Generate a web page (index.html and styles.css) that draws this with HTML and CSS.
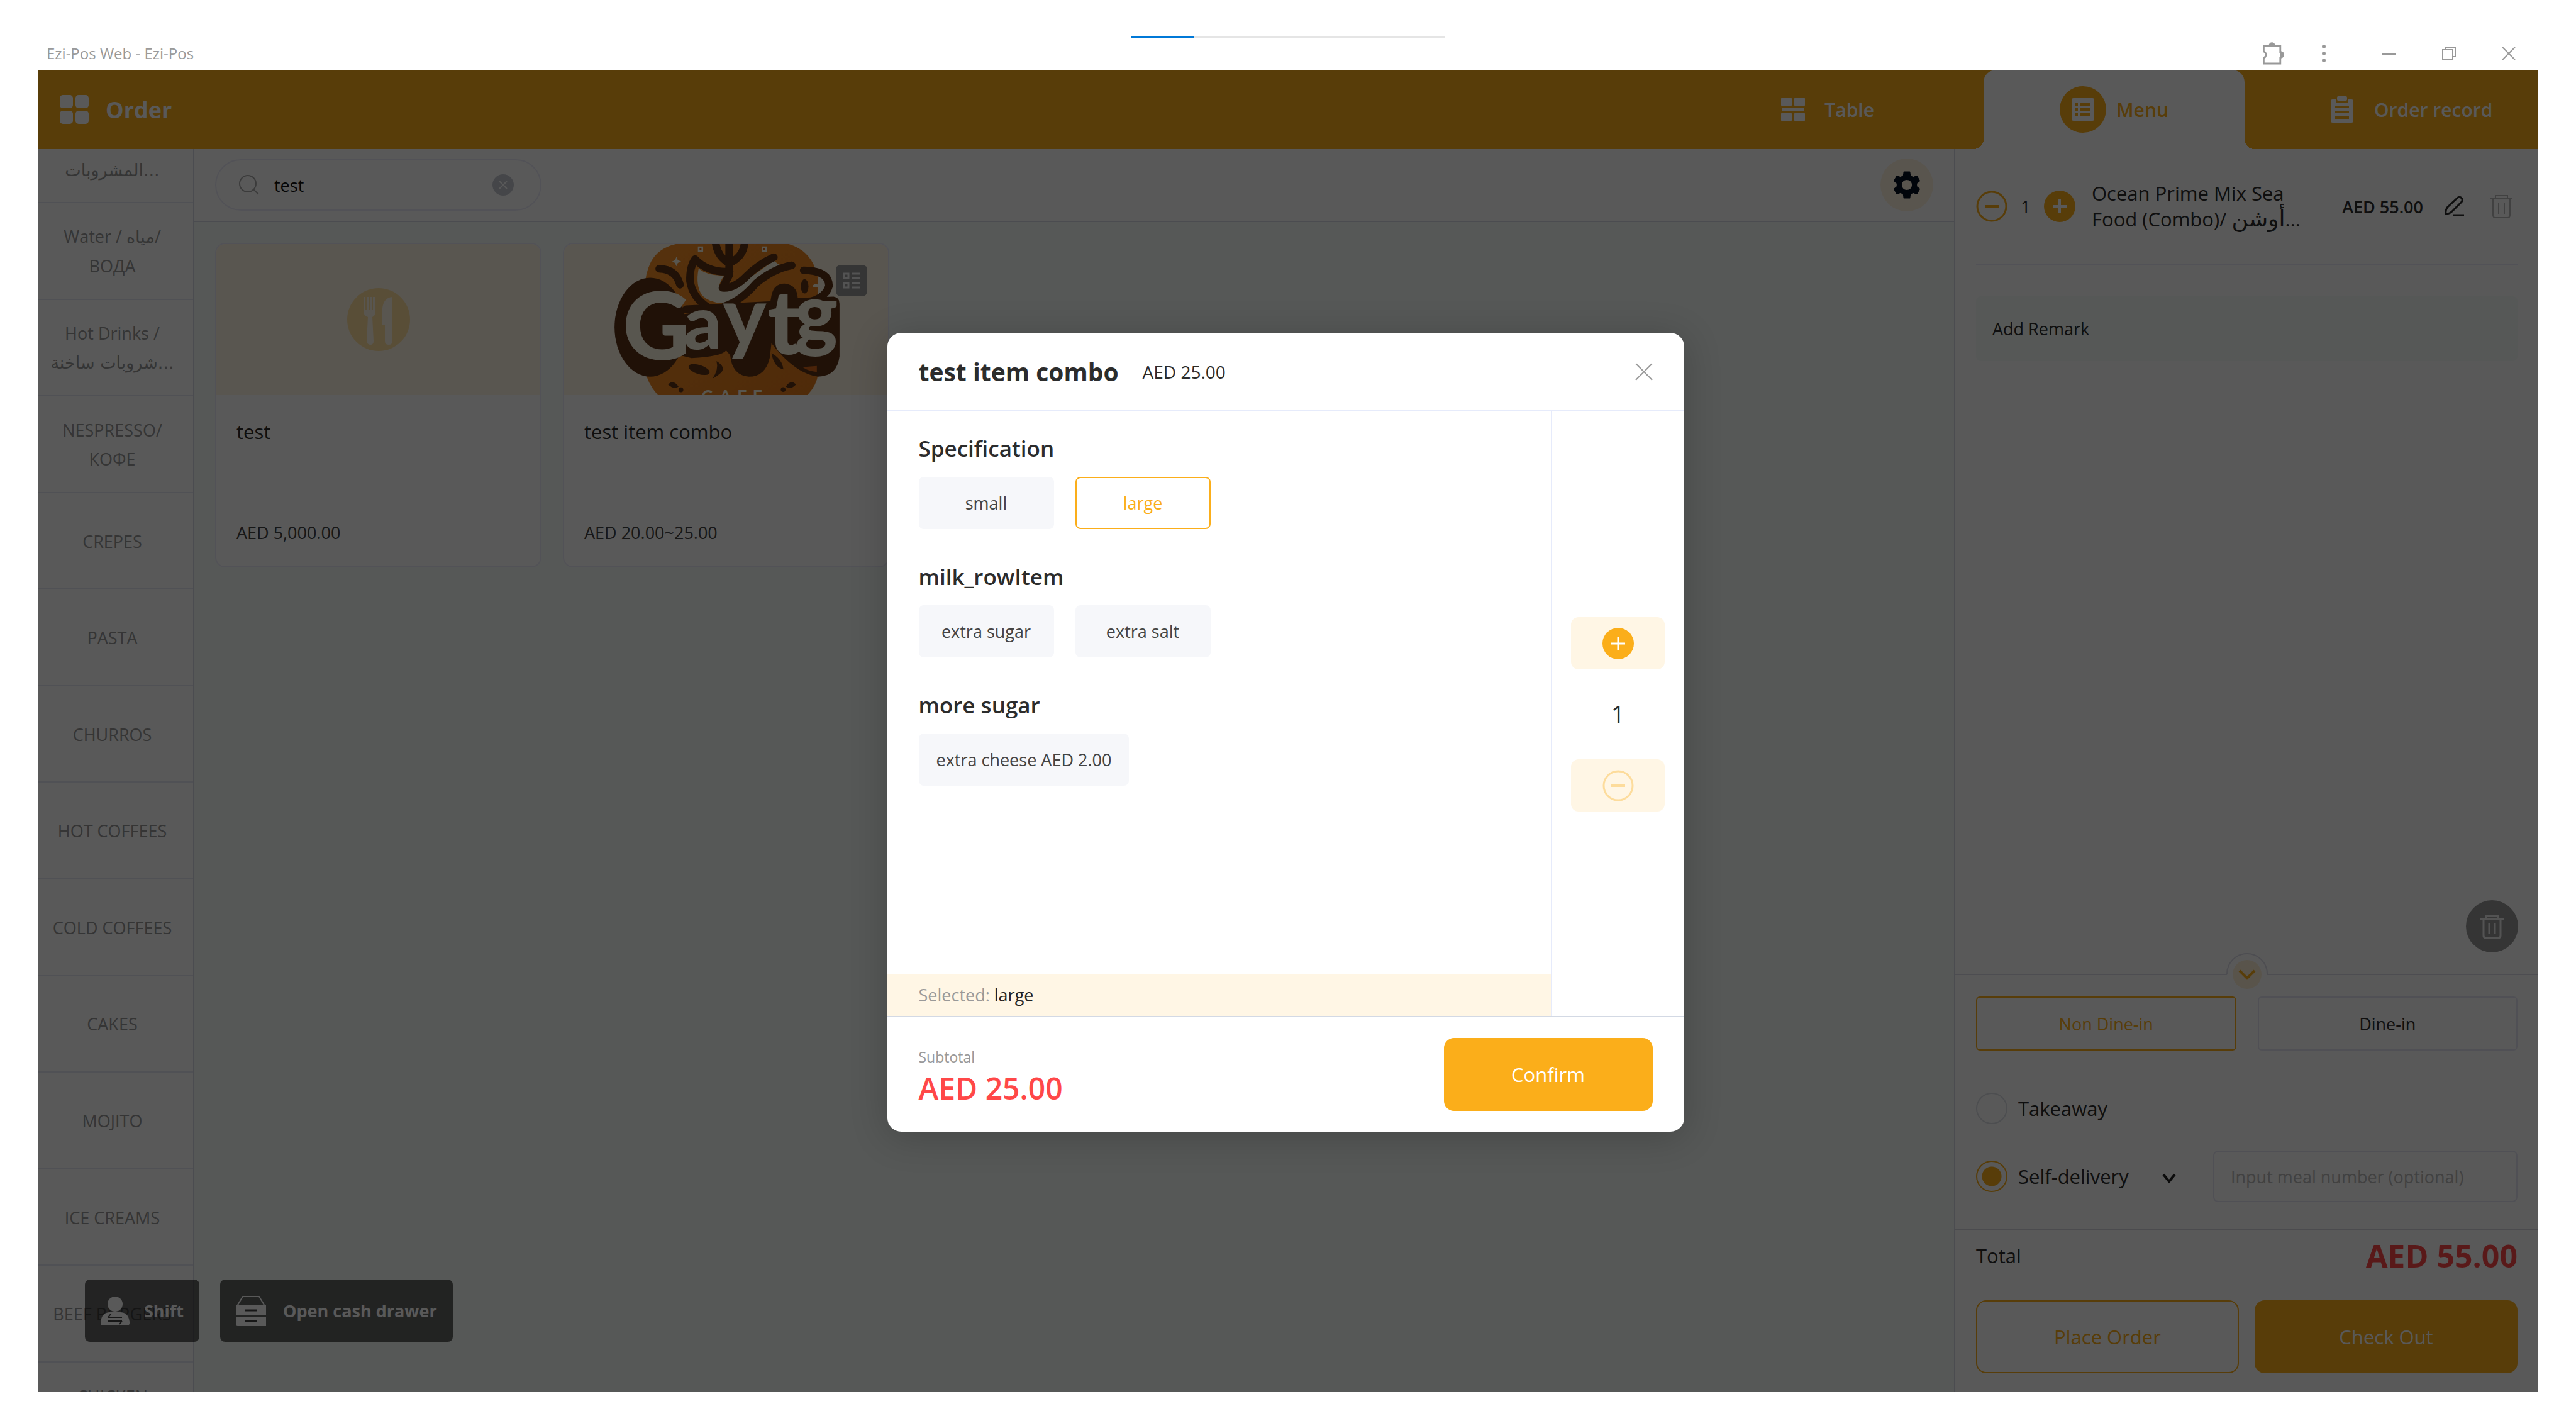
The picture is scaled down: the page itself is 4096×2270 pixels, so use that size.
FILE: index.html
```html
<!DOCTYPE html>
<html lang="en">
<head>
    <meta charset="UTF-8">
    <meta name="viewport" content="width=device-width, initial-scale=1.0">
    <title>Ezi-Pos Web - Ezi-Pos</title>
    <link rel="stylesheet" href="styles.css">
</head>
<body>
    <div class="load-bar"><div class="load-bar-fill"></div></div>

    <!-- Window title bar -->
    <div class="title-bar">
        <span class="window-title">Ezi-Pos Web - Ezi-Pos</span>
        <div class="window-buttons">
            <button class="win-btn" aria-label="Extensions">
                <svg width="36" height="40" viewBox="0 0 18 20" fill="none" stroke="#999" stroke-width="1.4"><path d="M1.7 4h13.2v4.8a2 2 0 0 1 0 4.4V18H1.7v-4.4a2.8 2.8 0 0 0 0-5.2z"/><path d="M6.5 3.6a1.8 1.8 0 0 1 3.6 0zM15.4 9a2 2 0 0 1 0 4z" fill="#999"/></svg>
            </button>
            <button class="win-btn dots" aria-label="More">
                <svg width="6" height="28" viewBox="0 0 6 28" fill="#999"><circle cx="3" cy="3" r="3"/><circle cx="3" cy="14" r="3"/><circle cx="3" cy="25" r="3"/></svg>
            </button>
            <button class="win-btn minimise" aria-label="Minimise">
                <svg width="22" height="22" viewBox="0 0 22 22" stroke="#999" stroke-width="2"><path d="M0 12h22"/></svg>
            </button>
            <button class="win-btn restore" aria-label="Restore">
                <svg width="22" height="22" viewBox="0 0 22 22" fill="none" stroke="#999" stroke-width="2"><path d="M1 5h16v16H1zM6 5V1h15v15h-4"/></svg>
            </button>
            <button class="win-btn close" aria-label="Close">
                <svg width="22" height="22" viewBox="0 0 22 22" stroke="#999" stroke-width="2"><path d="M1 1l20 20M21 1L1 21"/></svg>
            </button>
        </div>
    </div>

    <div class="app">
        <header class="app-header">
            <svg class="grid-icon" width="46" height="46" viewBox="0 0 46 46" fill="#fff"><rect width="21" height="21" rx="5"/><rect x="25" width="21" height="21" rx="5"/><rect y="25" width="21" height="21" rx="5"/><rect x="25" y="25" width="21" height="21" rx="5"/></svg>
            <h1>Order</h1>
            <nav class="tabs">
                <a href="#table" class="tab tab-table">
                    <svg width="38" height="38" viewBox="0 0 38 38" fill="#fff"><rect width="17" height="14" rx="2"/><rect x="21" width="17" height="14" rx="2"/><rect x="2" y="17" width="34" height="4"/><rect y="24" width="17" height="14" rx="2"/><rect x="21" y="24" width="17" height="14" rx="2"/></svg>
                    Table
                </a>
                <a href="#menu" class="tab tab-menu">
                    <svg width="74" height="74" viewBox="0 0 74 74"><circle cx="37" cy="37" r="37" fill="#fbae1a"/><rect x="19" y="19" width="36" height="36" rx="3" fill="#fff"/><path d="M25 29h4M33 29h16M25 37h4M33 37h16M25 45h4M33 45h16" stroke="#fbae1a" stroke-width="4"/></svg>
                    Menu
                </a>
                <a href="#record" class="tab tab-record">
                    <svg width="36" height="42" viewBox="0 0 36 42"><path d="M3 5h5v5h20V5h5q3 0 3 3v31q0 3-3 3H3q-3 0-3-3V8q0-3 3-3z" fill="#fff"/><rect x="10" width="16" height="7" rx="2" fill="#fff"/><path d="M7 17h22M7 25h22M7 34h22" stroke="#fbae1a" stroke-width="4"/></svg>
                    Order record
                </a>
            </nav>
        </header>

        <div class="app-body">
            <!-- Categories, scrolled a little -->
            <nav class="categories">
                <a href="#" class="category cut-top"><span class="ar">المشروبات...</span></a>
                <a href="#" class="category"><span>Water / <span class="ar">مياه</span>/<br>ВОДА</span></a>
                <a href="#" class="category"><span>Hot Drinks /<br><span class="ar">شروبات ساخنة...</span></span></a>
                <a href="#" class="category"><span>NESPRESSO/<br>КОФЕ</span></a>
                <a href="#" class="category">CREPES</a>
                <a href="#" class="category">PASTA</a>
                <a href="#" class="category">CHURROS</a>
                <a href="#" class="category">HOT COFFEES</a>
                <a href="#" class="category">COLD COFFEES</a>
                <a href="#" class="category">CAKES</a>
                <a href="#" class="category">MOJITO</a>
                <a href="#" class="category">ICE CREAMS</a>
                <a href="#" class="category">BEEF BURGERS</a>
                <a href="#" class="category cut-bottom">CHICKEN</a>
            </nav>

            <main class="products">
                <div class="toolbar">
                    <div class="search">
                        <svg width="32" height="32" viewBox="0 0 32 32" fill="none" stroke="#aaa" stroke-width="2"><circle cx="14" cy="14" r="13"/><path d="M23 23l8 8"/></svg>
                        <input type="text" value="test" aria-label="Search">
                        <button class="clear" aria-label="Clear search">
                            <svg width="34" height="34" viewBox="0 0 34 34"><circle cx="17" cy="17" r="17" fill="#c6c9d2"/><path d="M11 11l12 12M23 11L11 23" stroke="#fff" stroke-width="2"/></svg>
                        </button>
                    </div>
                    <button class="settings" aria-label="Settings">
                        <svg width="54" height="54" viewBox="0 0 24 24" fill="#050f22"><path fill-rule="evenodd" d="M19.14 12.94c.04-.3.06-.61.06-.94 0-.32-.02-.64-.07-.94l2.03-1.58a.49.49 0 0 0 .12-.61l-1.92-3.32a.49.49 0 0 0-.59-.22l-2.39.96a7 7 0 0 0-1.62-.94l-.36-2.54a.48.48 0 0 0-.48-.41h-3.84a.47.47 0 0 0-.47.41l-.36 2.54c-.59.24-1.13.57-1.62.94l-2.39-.96a.48.48 0 0 0-.59.22L2.74 8.87a.47.47 0 0 0 .12.61l2.03 1.58c-.05.3-.09.63-.09.94s.02.64.07.94l-2.03 1.58a.49.49 0 0 0-.12.61l1.92 3.32c.12.22.37.29.59.22l2.39-.96c.5.38 1.03.7 1.62.94l.36 2.54c.05.24.24.41.48.41h3.84c.24 0 .44-.17.47-.41l.36-2.54a7 7 0 0 0 1.62-.94l2.39.96c.22.08.47 0 .59-.22l1.92-3.32a.47.47 0 0 0-.12-.61zM12 15.6a3.6 3.6 0 1 1 0-7.2 3.6 3.6 0 0 1 0 7.2z"/></svg>
                    </button>
                </div>

                <div class="product-grid">
                    <article class="product-card">
                        <div class="product-image">
                            <svg width="100" height="100" viewBox="0 0 100 100"><circle cx="50" cy="50" r="50" fill="#ffdf9f"/><g fill="#fff6e5"><path d="M26 14h3v20h2V14h3v20h2V14h3v20h2V14h4v24q0 5-5 8l2 38q0 6-5 6t-6-6l2-38q-7-3-7-8z"/><path d="M72 14v70q0 6-6 6t-6-6V58h-4V32q2-17 16-18z"/></g></svg>
                        </div>
                        <div class="product-info">
                            <h2>test</h2>
                            <p>AED 5,000.00</p>
                        </div>
                    </article>

                    <article class="product-card">
                        <div class="product-image">
                            <svg class="logo" viewBox="85 75 1360 632" preserveAspectRatio="xMidYMid slice">
                                <defs>
                                    <linearGradient id="cafe" x1="0" y1="0" x2="1" y2="1">
                                        <stop offset="0" stop-color="#f58f26"/>
                                        <stop offset="1" stop-color="#e27a1c"/>
                                    </linearGradient>
                                </defs>
                                <path d="M555 75Q480 92 450 150Q425 200 425 260V600Q435 660 482 710H1103Q1145 665 1150 620V220Q1130 105 1028 75z" fill="url(#cafe)"/>
                                <!-- cup, leaf and steam -->
                                <path d="M650 178Q636 250 665 290Q725 345 820 300L995 168L965 145L795 265Q740 285 735 252Q745 220 758 206Q690 210 650 178z" fill="#fbf6e2"/>
                                <g fill="none" stroke="#5c3216" stroke-width="32" stroke-linecap="round" stroke-linejoin="round">
                                    <path d="M690 340Q625 300 614 230Q612 170 635 138Q690 195 780 190"/>
                                    <path d="M778 75V205L750 258Q800 262 850 210Q900 160 965 130"/>
                                    <path d="M722 75Q732 130 778 155Q835 130 842 75"/>
                                    <path d="M1040 164Q960 180 890 240Q830 310 760 335"/>
                                    <path d="M485 178Q555 180 572 245"/>
                                    <path d="M1090 185Q1195 185 1196 250Q1180 310 1080 322"/>
                                    <path d="M598 348L960 330"/>
                                </g>
                                <!-- lettering on its dark backing -->
                                <g fill="#5c3216">
                                    <ellipse cx="447" cy="423" rx="149" ry="207"/>
                                    <path d="M560 372L950 318L955 290Q965 240 1010 240Q1062 245 1065 300L1215 295Q1240 298 1240 325V545Q1230 628 1150 630Q1050 615 955 490L948 550Q930 630 860 630Q790 625 782 540L765 520Q750 545 620 552L570 540z"/>
                                </g>
                                <path d="M1085 590L1145 585V610Q1110 608 1085 590z" fill="#d4661a"/>
                                <text class="logo-word" y="560" fill="#fbf6e2"><tspan x="332" font-size="390">G</tspan><tspan x="588" y="515" font-size="310">a</tspan><tspan x="752" y="500" font-size="340">y</tspan><tspan x="938" y="535" font-size="370">t</tspan><tspan x="1052" y="485" font-size="340">g</tspan></text>
                                <g fill="#5c3216">
                                    <ellipse cx="652" cy="600" rx="46" ry="19" transform="rotate(18 652 600)"/>
                                    <path d="M725 565Q765 590 745 612Q725 630 708 638Q735 600 725 565z"/>
                                    <path d="M955 532Q1000 555 1005 600Q965 590 955 532z"/>
                                    <ellipse cx="1094" cy="252" rx="16" ry="30"/>
                                    <path d="M522 662Q545 640 566 672Q545 685 522 662zM1058 662Q1035 640 1015 672Q1038 685 1058 662z"/>
                                    <circle cx="576" cy="685" r="10"/>
                                    <circle cx="1004" cy="684" r="10"/>
                                </g>
                                <g fill="#fbf6e2">
                                    <path d="M557 128l6 14 14 6-14 6-6 14-6-14-12-6 12-6z"/>
                                    <path d="M647 85h22v22h-22zM914 85h22v22h-22z"/>
                                    <ellipse cx="1141" cy="250" rx="12" ry="7"/>
                                </g>
                                <path d="M654 92h8v8h-8zM921 92h8v8h-8z" fill="#d4661a"/>
                                <text class="logo-sub" x="662 738 812 876" y="736" font-size="70" fill="#fbf6e2">CAFE</text>
                            </svg>
                            <span class="combo-badge">
                                <svg width="28" height="26" viewBox="0 0 28 26" fill="none" stroke="#eee" stroke-width="3"><path d="M2 2h7v7H2zM2 17h7v7H2zM14 2h14M14 9h14M14 17h14M14 24h14"/></svg>
                            </span>
                        </div>
                        <div class="product-info">
                            <h2>test item combo</h2>
                            <p>AED 20.00~25.00</p>
                        </div>
                    </article>
                </div>
            </main>

            <!-- Current order -->
            <aside class="order-panel">
                <div class="order-list">
                    <div class="order-item">
                        <button class="round" aria-label="Less">
                            <svg width="50" height="50" viewBox="0 0 50 50" fill="none" stroke="#fbae1a"><circle cx="25" cy="25" r="23" stroke-width="3"/><path d="M14 25h22" stroke-width="4"/></svg>
                        </button>
                        <span class="item-qty">1</span>
                        <button class="round" aria-label="More">
                            <svg width="50" height="50" viewBox="0 0 50 50"><circle cx="25" cy="25" r="25" fill="#fbae1a"/><path d="M14 25h22M25 14v22" stroke="#fff" stroke-width="4"/></svg>
                        </button>
                        <span class="item-name">Ocean Prime Mix Sea<br>Food (Combo)/ <span class="ar">أوشن</span>...</span>
                        <span class="item-price">AED 55.00</span>
                        <button class="edit" aria-label="Edit">
                            <svg width="32" height="34" viewBox="0 0 32 34" fill="none" stroke="#2c2c2c" stroke-width="3"><path d="M2 29Q1 23 5 18L20 4Q23 1 26 3Q30 6 27 10L12 25Q8 29 2 29zM14 31h17"/></svg>
                        </button>
                        <button class="remove" aria-label="Delete">
                            <svg width="37" height="38" viewBox="0 0 37 38" fill="none" stroke="#bbb" stroke-width="2"><path d="M1 7h35M9 7V2h19v5M5 7v26q0 4 4 4h19q4 0 4-4V7M14 13v18M23 13v18"/></svg>
                        </button>
                    </div>
                    <button class="remark">Add Remark</button>
                    <button class="clear-order" aria-label="Clear order">
                        <svg width="37" height="38" viewBox="0 0 37 38" fill="none" stroke="#eee" stroke-width="3"><path d="M0 7h37M9 7V2h19v5M5 7v26q0 4 4 4h19q4 0 4-4V7M14 13v18M23 13v18"/></svg>
                    </button>
                </div>

                <div class="order-type">
                    <button class="collapse" aria-label="Collapse">
                        <svg width="68" height="68" viewBox="0 0 68 68"><circle cx="34" cy="34" r="32" fill="#fff"/><path d="M2 34a32 32 0 0 1 64 0" fill="none" stroke="#dcdce8" stroke-width="2"/><circle cx="34" cy="35" r="23" fill="#fff1d8"/><path d="M22 29l12 12 12-12" fill="none" stroke="#fbae1a" stroke-width="4"/></svg>
                    </button>
                    <div class="type-buttons">
                        <button class="type active">Non Dine-in</button>
                        <button class="type">Dine-in</button>
                    </div>
                    <label class="radio-row"><input type="radio" name="way">Takeaway</label>
                    <div class="delivery-row">
                        <label class="radio-row"><input type="radio" name="way" checked>Self-delivery</label>
                        <button class="more-ways" aria-label="Delivery options">
                            <svg width="22" height="20" viewBox="0 0 22 20" fill="none" stroke="#222" stroke-width="4"><path d="M2 4l9 11 9-11"/></svg>
                        </button>
                        <input type="text" class="meal-number" placeholder="Input meal number (optional)" aria-label="Meal number">
                    </div>
                </div>

                <div class="order-total">
                    <div class="total-row">
                        <span>Total</span>
                        <strong>AED 55.00</strong>
                    </div>
                    <div class="total-buttons">
                        <button class="btn-outline">Place Order</button>
                        <button class="btn-fill">Check Out</button>
                    </div>
                </div>
            </aside>
        </div>

        <div class="quick-actions">
            <button class="quick">
                <svg width="46" height="46" viewBox="0 0 46 46"><circle cx="23" cy="12" r="12" fill="#fff"/><path d="M0 42V40Q2 25 15 25h16q13 0 15 15v2q0 4-4 4H4q-4 0-4-4z" fill="#fff"/><path d="M12 33h22M16 28l-4 5M12 39h22M30 44l4-5" stroke="#444" stroke-width="2"/></svg>
                Shift
            </button>
            <button class="quick drawer">
                <svg width="48" height="48" viewBox="0 0 48 48"><path d="M2 16L11 1h26l9 15" fill="none" stroke="#fff" stroke-width="2"/><path d="M0 15h48v16H0zM0 33h48v15H3q-3 0-3-3z" fill="#fff"/><path d="M15 23h18M15 40h18" stroke="#444" stroke-width="3"/></svg>
                Open cash drawer
            </button>
        </div>

        <!-- Item options -->
        <div class="overlay">
            <section class="modal" role="dialog" aria-labelledby="modal-title">
                <div class="modal-header">
                    <h2 id="modal-title">test item combo</h2>
                    <span class="modal-price">AED 25.00</span>
                    <button class="modal-close" aria-label="Close">
                        <svg width="28" height="28" viewBox="0 0 28 28" stroke="#999" stroke-width="2"><path d="M1 1l26 26M27 1L1 27"/></svg>
                    </button>
                </div>
                <div class="modal-body">
                    <div class="modal-main">
                        <div class="option-groups">
                            <h3>Specification</h3>
                            <div class="options">
                                <button class="option">small</button>
                                <button class="option selected">large</button>
                            </div>
                            <h3>milk_rowItem</h3>
                            <div class="options">
                                <button class="option">extra sugar</button>
                                <button class="option">extra salt</button>
                            </div>
                            <h3>more sugar</h3>
                            <div class="options">
                                <button class="option">extra cheese AED 2.00</button>
                            </div>
                        </div>
                        <p class="selected-bar">Selected: <span>large</span></p>
                    </div>
                    <div class="quantity">
                        <button class="qty-btn" aria-label="Add one">
                            <svg width="50" height="50" viewBox="0 0 50 50"><circle cx="25" cy="25" r="25" fill="#fbae1a"/><path d="M14 25h22M25 14v22" stroke="#fff" stroke-width="3"/></svg>
                        </button>
                        <span>1</span>
                        <button class="qty-btn" aria-label="Remove one">
                            <svg width="50" height="50" viewBox="0 0 50 50" fill="none" stroke="#fddc9c"><circle cx="25" cy="25" r="23" stroke-width="3"/><path d="M14 25h22" stroke-width="4"/></svg>
                        </button>
                    </div>
                </div>
                <div class="modal-footer">
                    <div class="subtotal">
                        <span>Subtotal</span>
                        <strong>AED 25.00</strong>
                    </div>
                    <button class="btn-fill confirm">Confirm</button>
                </div>
            </section>
        </div>
    </div>
</body>
</html>
```
FILE: styles.css
```css
* {
    box-sizing: border-box;
}

body {
    margin: 0;
    min-height: 100vh;
    padding: 57px 60px 58px;
    display: flex;
    flex-direction: column;
    background-color: #fff;
    color: #2c2c2c;
    font-family: 'Open Sans', 'Noto Sans', 'DejaVu Sans', sans-serif;
    font-size: 27px;
}

h1, h2, h3, p {
    margin: 0;
}

a {
    color: inherit;
    text-decoration: none;
}

button, input {
    font: inherit;
    color: inherit;
    margin: 0;
    padding: 0;
    border: none;
    background: none;
}

svg {
    display: block;
    flex-shrink: 0;
}

.ar {
    font-family: 'DejaVu Sans', sans-serif;
}

.load-bar {
    width: 500px;
    height: 3px;
    margin: 0 auto;
    background-color: #e5e5e5;
}

.load-bar-fill {
    width: 20%;
    height: 100%;
    background-color: #0078d7;
}

/* Window title bar */
.title-bar {
    height: 51px;
    padding: 0 36px 2px 14px;
    display: flex;
    align-items: center;
    justify-content: space-between;
    color: #999;
    font-size: 24px;
}

.window-buttons {
    display: flex;
    align-items: center;
}

.dots {
    margin-left: 60px;
}

.minimise {
    margin-left: 90px;
}

.restore,
.close {
    margin-left: 73px;
}

.app {
    position: relative;
    flex: 1;
    display: flex;
    flex-direction: column;
    overflow: hidden;
}

/* Header */
.app-header {
    height: 126px;
    padding-left: 35px;
    display: flex;
    align-items: center;
    background-color: #fbae1a;
    color: #fff;
}

.app-header h1 {
    margin-left: 27px;
    font-size: 36px;
    font-weight: 700;
}

.tabs {
    margin-left: auto;
    align-self: stretch;
    display: flex;
    font-size: 30px;
    font-weight: 600;
}

.tab {
    display: flex;
    align-items: center;
}

.tab-table {
    gap: 31px;
    padding-right: 174px;
}

.tab-menu {
    position: relative;
    width: 415px;
    justify-content: center;
    gap: 16px;
    background-color: #fff;
    color: #fbae1a;
    border-radius: 20px 20px 0 0;
}

/* rounded feet of the active tab */
.tab-menu::before,
.tab-menu::after {
    content: "";
    position: absolute;
    bottom: 0;
    width: 16px;
    height: 16px;
}

.tab-menu::before {
    left: -16px;
    background: radial-gradient(circle at 0 0, #fbae1a 16px, #fff 16px);
}

.tab-menu::after {
    right: -16px;
    background: radial-gradient(circle at 100% 0, #fbae1a 16px, #fff 16px);
}

.tab-record {
    width: 467px;
    gap: 33px;
    padding-left: 137px;
    white-space: nowrap;
}

.app-body {
    flex: 1;
    display: flex;
    min-height: 0;
}

/* Categories */
.categories {
    width: 249px;
    flex-shrink: 0;
    display: grid;
    grid-template-rows: 86px repeat(12, 1fr) 46px;
    border-right: 2px solid #d8dae6;
    color: #999;
    line-height: 46px;
    overflow: hidden;
}

.category {
    display: flex;
    align-items: center;
    justify-content: center;
    padding: 2px 16px 0 6px;
    border-bottom: 2px solid #e6e8f4;
    text-align: center;
    white-space: nowrap;
    overflow: hidden;
}

.cut-top {
    align-items: flex-start;
    padding-top: 11px;
}

.cut-bottom {
    align-items: flex-start;
    padding-top: 31px;
    border-bottom: none;
}

/* Products */
.products {
    flex: 1;
    background-color: #f6fbf8;
}

.toolbar {
    height: 116px;
    padding: 0 33px;
    display: flex;
    align-items: center;
    justify-content: space-between;
    background-color: #fff;
    border-bottom: 2px solid #d8dae6;
}

.search {
    width: 519px;
    height: 82px;
    padding: 0 42px 0 36px;
    display: flex;
    align-items: center;
    border: 2px solid #ececf8;
    border-radius: 41px;
}

.search input {
    flex: 1;
    min-width: 0;
    margin-left: 24px;
    color: #111;
    outline: none;
}

.settings {
    width: 84px;
    height: 84px;
    display: flex;
    align-items: center;
    justify-content: center;
    border-radius: 50%;
    background-color: #fff3e0;
}

.product-grid {
    padding: 33px;
    display: grid;
    grid-template-columns: repeat(auto-fill, 519px);
    gap: 34px;
}

.product-card {
    border: 2px solid #ececf8;
    border-radius: 16px;
    background-color: #fff;
    overflow: hidden;
}

.product-image {
    position: relative;
    height: 240px;
    display: flex;
    align-items: center;
    justify-content: center;
    background-color: #fff6e5;
}

.logo {
    width: 100%;
    height: 100%;
}

.logo-word {
    font-family: Lato, sans-serif;
    font-weight: 900;
}

.logo-sub {
    font-family: Lato, sans-serif;
    font-weight: 700;
}

.combo-badge {
    position: absolute;
    top: 33px;
    right: 33px;
    width: 50px;
    height: 50px;
    display: flex;
    align-items: center;
    justify-content: center;
    border-radius: 8px;
    background-color: #999;
}

.product-info {
    height: 272px;
    padding: 36px 32px 35px;
    display: flex;
    flex-direction: column;
    justify-content: space-between;
}

.product-info h2 {
    font-size: 31px;
    font-weight: 400;
    line-height: 44px;
}

.product-info p {
    color: #444;
    line-height: 36px;
}

/* Order panel */
.order-panel {
    width: 929px;
    flex-shrink: 0;
    display: flex;
    flex-direction: column;
    border-left: 2px solid #d8dae6;
    background-color: #fff;
}

.order-list {
    position: relative;
    flex: 1;
    padding: 0 33px;
}

.order-item {
    height: 184px;
    padding-right: 7px;
    display: flex;
    align-items: center;
    border-bottom: 2px solid #ececf8;
}

.item-qty {
    width: 58px;
    text-align: center;
}

.item-name {
    flex: 1;
    margin-left: 26px;
    font-size: 31px;
    font-weight: 500;
    line-height: 41px;
    white-space: nowrap;
}

.item-name .ar {
    font-size: 36px;
    line-height: 1;
}

.item-price {
    font-weight: 600;
}

.edit {
    margin-left: 34px;
}

.remove {
    margin-left: 40px;
}

.remark {
    width: 100%;
    height: 103px;
    margin-top: 50px;
    padding: 0 26px;
    border-radius: 8px;
    background-color: #f6fbf8;
    text-align: left;
}

.clear-order {
    position: absolute;
    right: 32px;
    bottom: 34px;
    width: 83px;
    height: 83px;
    display: flex;
    align-items: center;
    justify-content: center;
    border-radius: 50%;
    background-color: #999;
}

.order-type {
    position: relative;
    padding: 34px 33px 42px;
    border-top: 2px solid #dcdce8;
    border-bottom: 2px solid #d8d8de;
}

.collapse {
    position: absolute;
    top: -36px;
    left: 50%;
    margin-left: -34px;
}

.type-buttons {
    display: grid;
    grid-template-columns: 1fr 1fr;
    gap: 34px;
    margin-bottom: 67px;
}

.type {
    height: 86px;
    border: 2px solid #e6e6f4;
    border-radius: 6px;
}

.type.active {
    border-color: #fbae1a;
    color: #fbae1a;
}

.radio-row {
    display: flex;
    align-items: center;
    gap: 17px;
    font-size: 31px;
    line-height: 50px;
}

.radio-row input {
    appearance: none;
    width: 50px;
    height: 50px;
    border: 2px solid #dcdfe6;
    border-radius: 50%;
}

.radio-row input:checked {
    border-color: #fbae1a;
    background: radial-gradient(circle, #fbae1a 15px, transparent 16px);
}

.delivery-row {
    display: flex;
    align-items: center;
    margin-top: 42px;
}

.more-ways {
    margin: 6px 59px 0 auto;
}

.meal-number {
    width: 484px;
    height: 82px;
    padding: 0 26px;
    border: 2px solid #e6e6f4;
    border-radius: 8px;
}

.meal-number::placeholder {
    color: #bbb;
}

.order-total {
    padding: 0 33px 29px;
}

.total-row {
    display: flex;
    align-items: center;
    justify-content: space-between;
    line-height: 82px;
    margin-bottom: 30px;
    font-size: 31px;
}

.total-row strong {
    color: #ff4848;
    font-size: 50px;
    font-weight: 700;
}

.total-buttons {
    display: grid;
    grid-template-columns: 1fr 1fr;
    gap: 25px;
}

.btn-outline,
.btn-fill {
    height: 116px;
    border: 2px solid #fbae1a;
    border-radius: 16px;
    color: #fbae1a;
    font-size: 31px;
}

.btn-fill {
    background-color: #fbae1a;
    color: #fff;
}

/* Buttons floating over the bottom left corner */
.quick-actions {
    position: absolute;
    left: 75px;
    bottom: 79px;
    display: flex;
    gap: 33px;
}

.quick {
    height: 99px;
    padding: 0 25px;
    display: flex;
    align-items: center;
    gap: 23px;
    border-radius: 8px;
    background-color: rgba(0, 0, 0, 0.6);
    color: #fff;
    font-weight: 700;
}

.drawer {
    gap: 27px;
}

/* Modal */
.overlay {
    position: absolute;
    inset: 0;
    display: flex;
    align-items: center;
    justify-content: center;
    padding: 5px 8px 0 0;
    background-color: rgba(0, 0, 0, 0.65);
}

.modal {
    width: 1267px;
    border-radius: 22px;
    background-color: #fff;
    box-shadow: 0 8px 60px rgba(0, 0, 0, 0.2);
    overflow: hidden;
}

.modal-header {
    height: 125px;
    padding: 0 50px;
    display: flex;
    align-items: center;
    border-bottom: 2px solid #e6ebfb;
}

.modal-header h2 {
    font-size: 39px;
    font-weight: 700;
}

.modal-price {
    margin-left: 38px;
    font-size: 28px;
}

.modal-close {
    margin-left: auto;
}

.modal-body {
    display: flex;
    min-height: 961px;
}

.modal-main {
    flex: 1;
    display: flex;
    flex-direction: column;
    border-right: 2px solid #e6ebfb;
}

.option-groups {
    flex: 1;
    padding: 34px 50px 0;
}

.option-groups h3 {
    margin-bottom: 21px;
    font-size: 35px;
    font-weight: 600;
    line-height: 49px;
}

.options {
    display: flex;
    gap: 34px;
    margin-bottom: 51px;
}

.option {
    min-width: 215px;
    height: 83px;
    padding: 0 26px;
    border: 2px solid #f6f7fa;
    border-radius: 8px;
    background-color: #f6f7fa;
    color: #444;
}

.option.selected {
    border-color: #fbae1a;
    background-color: #fff;
    color: #fbae1a;
}

.selected-bar {
    padding: 0 50px;
    background-color: #fff6e5;
    color: #999;
    line-height: 67px;
}

.selected-bar span {
    color: #222;
}

.quantity {
    width: 210px;
    display: flex;
    flex-direction: column;
    align-items: center;
    justify-content: center;
    padding-top: 2px;
    font-size: 38px;
    line-height: 143px;
}

.qty-btn {
    width: 149px;
    height: 83px;
    display: flex;
    align-items: center;
    justify-content: center;
    border-radius: 12px;
    background-color: #fff6e5;
}

.modal-footer {
    height: 184px;
    padding: 0 50px;
    display: flex;
    align-items: center;
    justify-content: space-between;
    border-top: 2px solid #d3d9e4;
}

.subtotal {
    display: flex;
    flex-direction: column;
    padding-top: 8px;
}

.subtotal span {
    color: #999;
    font-size: 23px;
    line-height: 36px;
}

.subtotal strong {
    color: #ff4848;
    font-size: 48px;
    font-weight: 600;
    line-height: 64px;
}

.confirm {
    width: 332px;
}
```
